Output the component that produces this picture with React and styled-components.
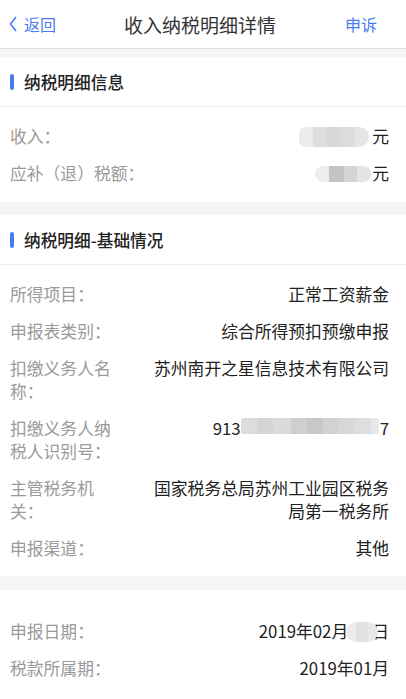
import styled, { createGlobalStyle } from 'styled-components'

const GlobalStyle = createGlobalStyle`
  html, body {
    margin: 0;
    padding: 0;
    background: #f4f5f7;
  }
  body {
    font-family: "Noto Sans CJK SC", "Noto Sans", "Liberation Sans", sans-serif;
  }
`

const Page = styled.div`
  width: 406px;
  min-height: 699px;
  background: #f4f5f7;
`

const NavBar = styled.div`
  height: 48px;
  display: flex;
  align-items: center;
  padding: 0 29px 0 9px;
  background: #fff;
  border-bottom: 1px solid #dedfe2;
`

const NavSide = styled.div`
  width: 80px;
  display: flex;
  align-items: center;
  justify-content: ${(p) => (p.$right ? 'flex-end' : 'flex-start')};
  color: #4a7ef0;
  font-size: 16px;
`

const NavTitle = styled.div`
  flex: 1;
  text-align: center;
  font-size: 19px;
  color: #333;
  padding-left: 14px;
`

const Section = styled.div`
  background: #fff;
  margin-top: ${(p) => p.$gap}px;
`

const SectionHeader = styled.div`
  height: 49px;
  display: flex;
  align-items: center;
  padding-left: 10px;
  border-bottom: 1px solid #ebecee;
  font-size: 16.7px;
  font-weight: 500;
  color: #222;
`

const Bar = styled.span`
  width: 4px;
  height: 16px;
  border-radius: 2px;
  background: #4a7ef0;
  margin-right: 10px;
`

const List = styled.div`
  padding: ${(p) => p.$top}px 0 ${(p) => p.$bottom}px;
`

const Row = styled.div`
  display: flex;
  align-items: flex-start;
  padding: 7px 17px 7px 10px;
  font-size: 16.8px;
  line-height: 23px;
`

const Label = styled.div`
  width: ${(p) => (p.$wide ? 'auto' : '104px')};
  flex-shrink: 0;
  color: #9a9a9a;
`

const Value = styled.div`
  flex: 1;
  margin-left: 36px;
  text-align: right;
  color: #222;
  display: flex;
  justify-content: flex-end;
  align-items: center;
  flex-wrap: wrap;
`

const ValueText = styled.div`
  flex: 1;
  margin-left: 36px;
  text-align: right;
  color: #222;
`

const Blur = styled.span`
  display: inline-flex;
  height: ${(p) => p.$h || 18}px;
  margin: 0 ${(p) => p.$mr || 1}px ${(p) => p.$mb || 0}px ${(p) => p.$ml || 0}px;
  border-radius: ${(p) => p.$radius || '9px'};
  overflow: hidden;
  filter: blur(0.6px);
`

const Cell = styled.span`
  width: ${(p) => p.$w}px;
  background: ${(p) => p.$c};
`

function Blurred({ blocks, ...rest }) {
  return (
    <Blur {...rest}>
      {blocks.map(([w, c], i) => (
        <Cell key={i} $w={w} $c={c} />
      ))}
    </Blur>
  )
}

function Chevron() {
  return (
    <svg width="8" height="16" viewBox="0 0 8 16" style={{ marginRight: 7 }}>
      <path d="M7 1 L1.5 8 L7 15" fill="none" stroke="#4a7ef0" strokeWidth="1.6" />
    </svg>
  )
}

export default function App() {
  return (
    <Page>
      <GlobalStyle />
      <NavBar>
        <NavSide>
          <Chevron />
          返回
        </NavSide>
        <NavTitle>收入纳税明细详情</NavTitle>
        <NavSide $right>申诉</NavSide>
      </NavBar>

      <Section $gap={8}>
        <SectionHeader>
          <Bar />
          纳税明细信息
        </SectionHeader>
        <List $top={11} $bottom={10}>
          <Row>
            <Label $wide>收入：</Label>
            <Value>
              <Blurred
                $h={20}
                $mr={3}
                $radius="6px 10px 10px 6px"
                blocks={[
                  [14, '#ececec'],
                  [14, '#dedede'],
                  [14, '#d8d8d8'],
                  [14, '#dcdcdc'],
                  [14, '#e6e6e6'],
                ]}
              />
              元
            </Value>
          </Row>
          <Row>
            <Label $wide>应补（退）税额：</Label>
            <Value>
              <Blurred
                $h={16}
                $mr={0}
                $radius="8px 8px 8px 8px"
                blocks={[
                  [14, '#eeeeee'],
                  [15, '#c4c4c4'],
                  [13, '#d4d4d4'],
                  [14, '#e4e4e4'],
                ]}
              />
              元
            </Value>
          </Row>
        </List>
      </Section>

      <Section $gap={13}>
        <SectionHeader>
          <Bar />
          纳税明细-基础情况
        </SectionHeader>
        <List $top={11} $bottom={9}>
          <Row>
            <Label>所得项目：</Label>
            <ValueText>正常工资薪金</ValueText>
          </Row>
          <Row>
            <Label>申报表类别：</Label>
            <ValueText>综合所得预扣预缴申报</ValueText>
          </Row>
          <Row>
            <Label>扣缴义务人名称：</Label>
            <ValueText>苏州南开之星信息技术有限公司</ValueText>
          </Row>
          <Row>
            <Label>扣缴义务人纳税人识别号：</Label>
            <Value>
              <span>913</span>
              <Blurred
                $h={16}
                $mr={0}
                $mb={6}
                $radius="2px"
                blocks={[
                  [16, '#dcdcdc'],
                  [16, '#d4d4d4'],
                  [18, '#dadada'],
                  [16, '#cfcfcf'],
                  [16, '#c8c8c8'],
                  [16, '#d2d2d2'],
                  [16, '#d8d8d8'],
                  [16, '#dedede'],
                  [8, '#e8e8e8'],
                ]}
              />
              <span>7</span>
            </Value>
          </Row>
          <Row>
            <Label>主管税务机关：</Label>
            <ValueText>国家税务总局苏州工业园区税务局第一税务所</ValueText>
          </Row>
          <Row>
            <Label>申报渠道：</Label>
            <ValueText>其他</ValueText>
          </Row>
        </List>
      </Section>

      <Section $gap={14}>
        <List $top={23} $bottom={12}>
          <Row>
            <Label>申报日期：</Label>
            <Value>
              <span>2019年02月</span>
              <Blurred
                $h={20}
                $mr={-6}
                $ml={-2}
                $radius="10px"
                blocks={[
                  [10, '#ececec'],
                  [12, '#e2e2e2'],
                  [10, '#e8e8e8'],
                ]}
              />
              <span>日</span>
            </Value>
          </Row>
          <Row>
            <Label>税款所属期：</Label>
            <ValueText>2019年01月</ValueText>
          </Row>
        </List>
      </Section>
    </Page>
  )
}
